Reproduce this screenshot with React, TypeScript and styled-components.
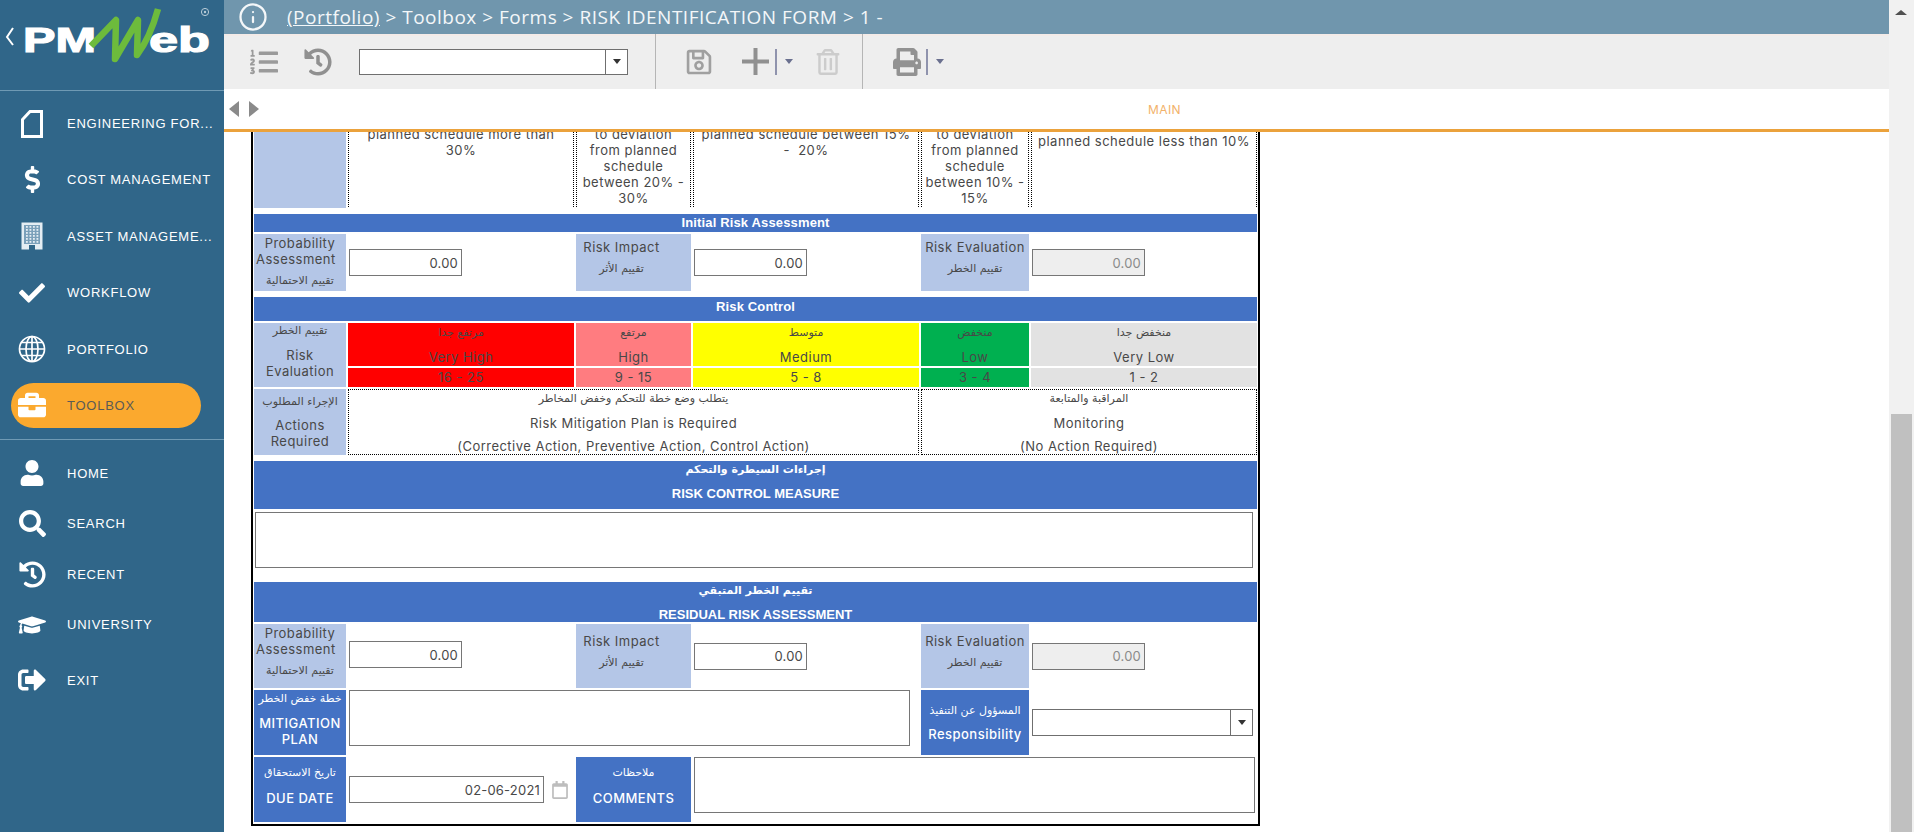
import styled, { createGlobalStyle } from "styled-components";
import type { ReactNode } from "react";
import { Info } from "lucide-react";
import {
  FaBriefcase,
  FaCheck,
  FaDollarSign,
  FaGraduationCap,
  FaHistory,
  FaListOl,
  FaPrint,
  FaRegCalendar,
  FaRegSave,
  FaRegTrashAlt,
  FaSearch,
  FaSignOutAlt,
  FaUser,
} from "react-icons/fa";

const formFont = `Inter, "Open Sans", "DejaVu Sans", sans-serif`;

const GlobalStyle = createGlobalStyle`
  html, body {
    margin: 0;
    padding: 0;
    background: #fff;
    overflow: hidden;
  }
  * {
    box-sizing: border-box;
  }
`;

const Page = styled.div`
  display: flex;
  width: 1914px;
  height: 832px;
  overflow: hidden;
`;

const Sidebar = styled.aside`
  width: 224px;
  flex: none;
  background: #306689;
  color: #fff;
  font-family: "Liberation Sans", Arial, sans-serif;
`;

const LogoBox = styled.div`
  height: 91px;
  border-bottom: 1px solid #6f9ab4;
`;

const NavGroup = styled.nav<{ $gap: number; $pad: number }>`
  display: flex;
  flex-direction: column;
  gap: ${(p) => p.$gap}px;
  padding: ${(p) => p.$pad}px 0 11px;
`;

const NavLine = styled.div`
  height: 1px;
  background: #6f9ab4;
`;

const NavItem = styled.div<{ $active?: boolean; $push?: number }>`
  display: flex;
  align-items: center;
  gap: 21px;
  height: 45px;
  margin: ${(p) => p.$push ?? 0}px 23px 0 11px;
  padding-left: 7px;
  border-radius: 23px;
  background: ${(p) => (p.$active ? "#fba92e" : "transparent")};
  color: ${(p) => (p.$active ? "#5b5b55" : "#fff")};
  font-size: 13px;
  letter-spacing: 0.75px;
  white-space: nowrap;
`;

const NavIcon = styled.span`
  display: flex;
  align-items: center;
  justify-content: center;
  width: 28px;
  height: 28px;
  flex: none;
  color: #fff;
`;

const Main = styled.main`
  width: 1665px;
  flex: none;
  display: flex;
  flex-direction: column;
  height: 832px;
`;

const TopBar = styled.header`
  display: flex;
  align-items: center;
  gap: 19px;
  height: 34px;
  flex: none;
  padding-left: 14px;
  background: #7096ad;
  color: #f4f7f9;
  font-family: "Open Sans", Roboto, sans-serif;
  font-size: 19px;
  letter-spacing: 0.5px;
`;

const Crumb = styled.span`
  text-decoration: underline;
`;

const Toolbar = styled.div`
  display: flex;
  flex: none;
  height: 55px;
  background: #eeeeee;
  border-top: 2px solid #f3ebe8;
`;

const ToolGroup = styled.div<{ $pad: number; $end: number; $line?: boolean }>`
  display: flex;
  align-items: center;
  padding: 0 ${(p) => p.$end}px 0 ${(p) => p.$pad}px;
  border-right: ${(p) => (p.$line ? "1px solid #b5b5b5" : "none")};
  margin-top: -2px;
`;

const Tool = styled.span<{ $left?: number; $color: string }>`
  display: flex;
  margin-left: ${(p) => p.$left ?? 0}px;
  color: ${(p) => p.$color};
`;

const ToolDivider = styled.span<{ $left: number }>`
  width: 2px;
  height: 26px;
  margin-left: ${(p) => p.$left}px;
  background: #8f93ad;
`;

const Caret = styled.span<{ $left?: number; $color?: string }>`
  width: 0;
  height: 0;
  margin-left: ${(p) => p.$left ?? 0}px;
  border-left: 4px solid transparent;
  border-right: 4px solid transparent;
  border-top: 5px solid ${(p) => p.$color ?? "#6a708f"};
`;

const Combo = styled.div<{ $w: number; $h: number; $left?: number }>`
  display: flex;
  justify-content: flex-end;
  width: ${(p) => p.$w}px;
  height: ${(p) => p.$h}px;
  margin-left: ${(p) => p.$left ?? 0}px;
  border: 1px solid #6f6f6f;
  background: #fff;
`;

const ComboArrow = styled.span`
  display: flex;
  align-items: center;
  justify-content: center;
  width: 22px;
  border-left: 1px solid #6f6f6f;
`;

const TabStrip = styled.div`
  display: flex;
  align-items: center;
  flex: none;
  height: 43px;
  padding-left: 5px;
  background: #fff;
  border-bottom: 3px solid #eba23c;
`;

const TabArrow = styled.span<{ $dir: "left" | "right" }>`
  width: 0;
  height: 0;
  margin-right: 10px;
  border-top: 8.5px solid transparent;
  border-bottom: 8.5px solid transparent;
  ${(p) => (p.$dir === "left" ? "border-right: 10px solid #8a8a8a;" : "border-left: 10px solid #8a8a8a;")}
`;

const TabLabel = styled.span`
  margin-left: 879px;
  color: #f2b26a;
  font-family: ${formFont};
  font-size: 12px;
  letter-spacing: 0.4px;
`;

const Scroller = styled.div`
  flex: 1;
  min-height: 0;
  overflow: hidden;
  background: #fff;
`;

const Form = styled.section`
  width: 1009px;
  height: 700px;
  margin: -6px 0 0 27px;
  padding: 0 1px;
  border: solid #000;
  border-width: 0 2px 2px;
  font-family: ${formFont};
  font-size: 13px;
  line-height: 16px;
  color: #484848;
  letter-spacing: 0.48px;
`;

const FormGrid = styled.div`
  display: grid;
  grid-template-columns: 92px 226px 115px 226px 108px 226px;
  grid-template-rows: 82px 22px 57px 28px 43px 19px 66px 52px 57px 52px 64px 65px 65px;
  gap: 2px;
`;

const Banner = styled.div<{ $top: number; $lift?: number }>`
  grid-column: 1 / -1;
  margin-top: ${(p) => p.$top}px;
  padding-bottom: ${(p) => p.$lift ?? 0}px;
  display: flex;
  flex-direction: column;
  align-items: center;
  justify-content: center;
  background: #4472c4;
  color: #fff;
  font-family: "Liberation Sans", Arial, sans-serif;
  font-weight: 700;
  font-size: 13px;
  letter-spacing: 0.15px;
`;

const BannerTall = styled(Banner)`
  justify-content: flex-start;
  letter-spacing: 0;
`;

const Ar = styled.span<{ $gap?: number; $before?: number }>`
  display: block;
  font-family: "DejaVu Sans", sans-serif;
  font-size: 11px;
  line-height: 16px;
  letter-spacing: 0;
  margin-bottom: ${(p) => p.$gap ?? 0}px;
  margin-top: ${(p) => p.$before ?? 0}px;
`;

const Label = styled.div<{ $dark?: boolean; $top?: number; $span?: number; $right?: number }>`
  padding-top: ${(p) => p.$top ?? 0}px;
  padding-right: ${(p) => p.$right ?? 0}px;
  grid-row: span ${(p) => p.$span ?? 1};
  text-align: center;
  background: ${(p) => (p.$dark ? "#4472c4" : "#b4c6e7")};
  color: ${(p) => (p.$dark ? "#fff" : "#484848")};
  font-weight: ${(p) => (p.$dark ? 500 : 400)};
  white-space: nowrap;
`;

const Field = styled.div<{ $span?: number }>`
  grid-column: span ${(p) => p.$span ?? 1};
  display: flex;
  align-items: center;
  gap: 7px;
  padding-left: 1px;
`;

const NumberInput = styled.input<{ $w?: number; $shift?: number }>`
  width: ${(p) => p.$w ?? 113}px;
  height: 27px;
  margin-top: ${(p) => p.$shift ?? 0}px;
  padding: 0 3px 0 0;
  border: 1px solid #767676;
  border-radius: 0;
  text-align: right;
  font: inherit;
  letter-spacing: 0.2px;
  color: #484848;
  background: #fff;
  outline: none;
  &:disabled {
    background: #eeeeee;
    color: #8a8a8a;
  }
`;

const Area = styled.textarea<{ $w: number; $h: number; $top?: number; $left?: number }>`
  display: block;
  width: ${(p) => p.$w}px;
  height: ${(p) => p.$h}px;
  margin: ${(p) => p.$top ?? 0}px 0 0 ${(p) => p.$left ?? 0}px;
  border: 1px solid #767676;
  border-radius: 0;
  resize: none;
  outline: none;
  background: #fff;
`;

const WideField = styled.div`
  grid-column: 1 / -1;
`;

const Swatch = styled.div<{ $bg: string }>`
  padding-top: 2px;
  text-align: center;
  background: ${(p) => p.$bg};
  white-space: nowrap;
`;

const Range = styled.div<{ $bg: string; $col: number }>`
  grid-column: ${(p) => p.$col};
  line-height: 19px;
  text-align: center;
  background: ${(p) => p.$bg};
  white-space: nowrap;
`;

const TopCell = styled.div<{ $top?: number }>`
  padding-top: ${(p) => p.$top ?? 0}px;
  margin-bottom: 1px;
  text-align: center;
  white-space: nowrap;
  border-left: 1px dotted #000;
  border-right: 1px dotted #000;
`;

const ActionCell = styled.div<{ $span: number }>`
  grid-column: span ${(p) => p.$span};
  padding-top: 1px;
  text-align: center;
  white-space: nowrap;
  border: 1px dotted #000;
`;

const ActionNote = styled.div`
  margin-top: 7px;
`;

const ScrollTrack = styled.div`
  flex: 1;
  display: flex;
  flex-direction: column;
  padding-left: 2px;
  background: #f1f1f1;
`;

const ScrollUp = styled.span`
  width: 0;
  height: 0;
  margin: 10px 0 0 4px;
  border-left: 6px solid transparent;
  border-right: 6px solid transparent;
  border-bottom: 5px solid #505050;
`;

const ScrollThumb = styled.div`
  width: 21px;
  height: 418px;
  margin-top: auto;
  background: #c0c0c0;
`;

const Logo = () => (
  <svg width="224" height="90" viewBox="0 0 224 90">
    <polyline points="13,28 7,37 13,45" fill="none" stroke="#fff" strokeWidth="2" />
    <g fontFamily="Liberation Sans, Arial, sans-serif" fontWeight="700" fontSize="35" fill="#fff" stroke="#fff" strokeWidth="1.2">
      <text x="23" y="52" textLength="73" lengthAdjust="spacingAndGlyphs">
        PM
      </text>
      <text x="149" y="52" textLength="61" lengthAdjust="spacingAndGlyphs">
        eb
      </text>
    </g>
    <path
      d="M91 46 L116 20 L115 59 L138 20 L137 55 Q150 38 158 9"
      fill="none"
      stroke="#6dbb3c"
      strokeWidth="6.5"
      strokeLinejoin="round"
    />
    <circle cx="205" cy="12" r="3.6" fill="none" stroke="#b9ccd8" strokeWidth="1" />
    <circle cx="205" cy="12" r="1.2" fill="#b9ccd8" />
  </svg>
);

const DocIcon = () => (
  <svg width="22" height="28" viewBox="0 0 22 28">
    <path d="M9 1.5 H20.5 V26.5 H1.5 V9.5 Z" fill="none" stroke="#fff" strokeWidth="3" strokeLinejoin="miter" />
  </svg>
);

const windowDots = Array.from({ length: 24 }, (_, i) => ({ x: 5 + (i % 4) * 3.5, y: 4 + Math.floor(i / 4) * 3 }));

const BuildingIcon = () => (
  <svg width="22" height="28" viewBox="0 0 22 28">
    <rect x="0.5" y="0.5" width="21" height="27" fill="#e4edf3" />
    <rect x="3" y="3" width="16" height="19" fill="#7ba0ba" />
    {windowDots.map((dot) => (
      <rect key={`${dot.x}-${dot.y}`} x={dot.x} y={dot.y} width="1.8" height="1.8" fill="#e4edf3" />
    ))}
    <rect x="8" y="23" width="6" height="5" fill="#306689" />
  </svg>
);

const GlobeIcon = () => (
  <svg width="28" height="28" viewBox="0 0 28 28" fill="none" stroke="#fff" strokeWidth="1.7">
    <circle cx="14" cy="14" r="12.5" />
    <ellipse cx="14" cy="14" rx="6" ry="12.5" />
    <path d="M14 1.5 V26.5 M1.5 14 H26.5 M3.5 7.5 H24.5 M3.5 20.5 H24.5" />
  </svg>
);

const PlusIcon = () => (
  <svg width="27" height="27" viewBox="0 0 27 27" fill="#909090">
    <rect x="0" y="11.5" width="27" height="4" />
    <rect x="11.5" y="0" width="4" height="27" />
  </svg>
);

const mainNav: { label: string; icon: ReactNode; active?: boolean }[] = [
  { label: "ENGINEERING FOR...", icon: <DocIcon /> },
  { label: "COST MANAGEMENT", icon: <FaDollarSign size={27} /> },
  { label: "ASSET MANAGEME...", icon: <BuildingIcon /> },
  { label: "WORKFLOW", icon: <FaCheck size={26} /> },
  { label: "PORTFOLIO", icon: <GlobeIcon /> },
  { label: "TOOLBOX", icon: <FaBriefcase size={28} />, active: true },
];

const userNav: { label: string; icon: ReactNode; push?: number }[] = [
  { label: "HOME", icon: <FaUser size={26} /> },
  { label: "SEARCH", icon: <FaSearch size={27} /> },
  { label: "RECENT", icon: <FaHistory size={27} /> },
  { label: "UNIVERSITY", icon: <FaGraduationCap size={28} /> },
  { label: "EXIT", icon: <FaSignOutAlt size={28} />, push: 5 },
];

const levels = [
  { ar: "مرتفع جدا", en: "Very High", range: "16 - 25", bg: "#ff0000" },
  { ar: "مرتفع", en: "High", range: "9 - 15", bg: "#ff7c80" },
  { ar: "متوسط", en: "Medium", range: "5 - 8", bg: "#ffff00" },
  { ar: "منخفض", en: "Low", range: "3 - 4", bg: "#00b050" },
  { ar: "منخفض جدا", en: "Very Low", range: "1 - 2", bg: "#e2e2e2" },
];

const AssessmentRow = ({ tall }: { tall?: boolean }) => (
  <>
    <Label $top={1}>
      Probability
      <br />
      Assessment&nbsp;&nbsp;
      <Ar $before={6}>تقييم الاحتمالية</Ar>
    </Label>
    <Field>
      <NumberInput defaultValue="0.00" $shift={tall ? -3 : 0} />
    </Field>
    <Label $top={tall ? 9 : 5} $right={24}>
      Risk Impact
      <Ar $before={6}>تقييم الأثر</Ar>
    </Label>
    <Field>
      <NumberInput defaultValue="0.00" />
    </Field>
    <Label $top={tall ? 9 : 5}>
      Risk Evaluation
      <Ar $before={6}>تقييم الخطر</Ar>
    </Label>
    <Field>
      <NumberInput defaultValue="0.00" disabled />
    </Field>
  </>
);

const App = () => (
  <Page>
    <GlobalStyle />
    <Sidebar>
      <LogoBox>
        <Logo />
      </LogoBox>
      <NavGroup $gap={11.4} $pad={10}>
        {mainNav.map((item) => (
          <NavItem key={item.label} $active={item.active}>
            <NavIcon>{item.icon}</NavIcon>
            {item.label}
          </NavItem>
        ))}
      </NavGroup>
      <NavLine />
      <NavGroup $gap={5.5} $pad={11}>
        {userNav.map((item) => (
          <NavItem key={item.label} $push={item.push}>
            <NavIcon>{item.icon}</NavIcon>
            {item.label}
          </NavItem>
        ))}
      </NavGroup>
    </Sidebar>

    <Main>
      <TopBar>
        <Info size={30} strokeWidth={1.8} />
        <span>
          <Crumb>(Portfolio)</Crumb> &gt; Toolbox &gt; Forms &gt; RISK IDENTIFICATION FORM &gt; 1 -
        </span>
      </TopBar>

      <Toolbar>
        <ToolGroup $pad={26} $end={27} $line>
          <Tool $color="#9a9a9a">
            <FaListOl size={28} />
          </Tool>
          <Tool $left={26} $color="#909090">
            <FaHistory size={28} />
          </Tool>
          <Combo $w={269} $h={26} $left={27}>
            <ComboArrow>
              <Caret $color="#333" />
            </ComboArrow>
          </Combo>
        </ToolGroup>
        <ToolGroup $pad={29} $end={21} $line>
          <Tool $color="#a0a0a0">
            <FaRegSave size={28} />
          </Tool>
          <Tool $left={29} $color="#909090">
            <PlusIcon />
          </Tool>
          <ToolDivider $left={6} />
          <Caret $left={8} />
          <Tool $left={22} $color="#cccccc">
            <FaRegTrashAlt size={26} />
          </Tool>
        </ToolGroup>
        <ToolGroup $pad={30} $end={0}>
          <Tool $color="#929292">
            <FaPrint size={28} />
          </Tool>
          <ToolDivider $left={5} />
          <Caret $left={8} />
        </ToolGroup>
      </Toolbar>

      <TabStrip>
        <TabArrow $dir="left" />
        <TabArrow $dir="right" />
        <TabLabel>MAIN</TabLabel>
      </TabStrip>

      <Scroller>
        <Form>
          <FormGrid>
            <Label />
            <TopCell>
              planned schedule more than
              <br />
              30%
            </TopCell>
            <TopCell>
              to deviation
              <br />
              from planned
              <br />
              schedule
              <br />
              between 20% -
              <br />
              30%
            </TopCell>
            <TopCell>
              planned schedule between 15%
              <br />- &nbsp;20%
            </TopCell>
            <TopCell>
              to deviation
              <br />
              from planned
              <br />
              schedule
              <br />
              between 10% -
              <br />
              15%
            </TopCell>
            <TopCell $top={7}>planned schedule less than 10%</TopCell>

            <Banner $top={4}>Initial Risk Assessment</Banner>
            <AssessmentRow />

            <Banner $top={4} $lift={4}>
              Risk Control
            </Banner>
            <Label $span={2}>
              <Ar $gap={8}>تقييم الخطر</Ar>
              Risk
              <br />
              Evaluation
            </Label>
            {levels.map((level) => (
              <Swatch key={level.en} $bg={level.bg}>
                <Ar $gap={8}>{level.ar}</Ar>
                {level.en}
              </Swatch>
            ))}
            {levels.map((level, i) => (
              <Range key={level.range} $bg={level.bg} $col={i + 2}>
                {level.range}
              </Range>
            ))}

            <Label $top={5}>
              <Ar $gap={7}>الإجراء المطلوب</Ar>
              Actions
              <br />
              Required
            </Label>
            <ActionCell $span={3}>
              <Ar $gap={8}>يتطلب وضع خطة للتحكم وخفض المخاطر</Ar>
              Risk Mitigation Plan is Required
              <ActionNote>(Corrective Action, Preventive Action, Control Action)</ActionNote>
            </ActionCell>
            <ActionCell $span={2}>
              <Ar $gap={8}>المراقبة والمتابعة</Ar>
              Monitoring
              <ActionNote>(No Action Required)</ActionNote>
            </ActionCell>

            <BannerTall $top={4}>
              <Ar $before={1} $gap={8}>
                إجراءات السيطرة والتحكم
              </Ar>
              RISK CONTROL MEASURE
            </BannerTall>
            <WideField>
              <Area $h={56} $w={998} $top={1} $left={1} />
            </WideField>

            <BannerTall $top={12}>
              <Ar $gap={8} $before={1}>
                تقييم الخطر المتبقي
              </Ar>
              RESIDUAL RISK ASSESSMENT
            </BannerTall>
            <AssessmentRow tall />

            <Label $dark $top={1}>
              <Ar $gap={8}>خطة خفض الخطر</Ar>
              MITIGATION
              <br />
              PLAN
            </Label>
            <Field $span={3}>
              <Area $h={56} $w={561} $top={-9} />
            </Field>
            <Label $dark $top={13}>
              <Ar $gap={7}>المسؤول عن التنفيذ</Ar>
              Responsibility
            </Label>
            <Field>
              <Combo $w={221} $h={27}>
                <ComboArrow>
                  <Caret $color="#333" />
                </ComboArrow>
              </Combo>
            </Field>

            <Label $dark $top={8}>
              <Ar $gap={9}>تاريخ الاستحقاق</Ar>
              DUE DATE
            </Label>
            <Field>
              <NumberInput defaultValue="02-06-2021" $w={195} />
              <Tool $color="#bdbdbd">
                <FaRegCalendar size={18} />
              </Tool>
            </Field>
            <Label $dark $top={8}>
              <Ar $gap={9}>ملاحظات</Ar>
              COMMENTS
            </Label>
            <Field $span={3}>
              <Area $h={56} $w={561} $top={-9} />
            </Field>
          </FormGrid>
        </Form>
      </Scroller>
    </Main>

    <ScrollTrack>
      <ScrollUp />
      <ScrollThumb />
    </ScrollTrack>
  </Page>
);

export default App;
